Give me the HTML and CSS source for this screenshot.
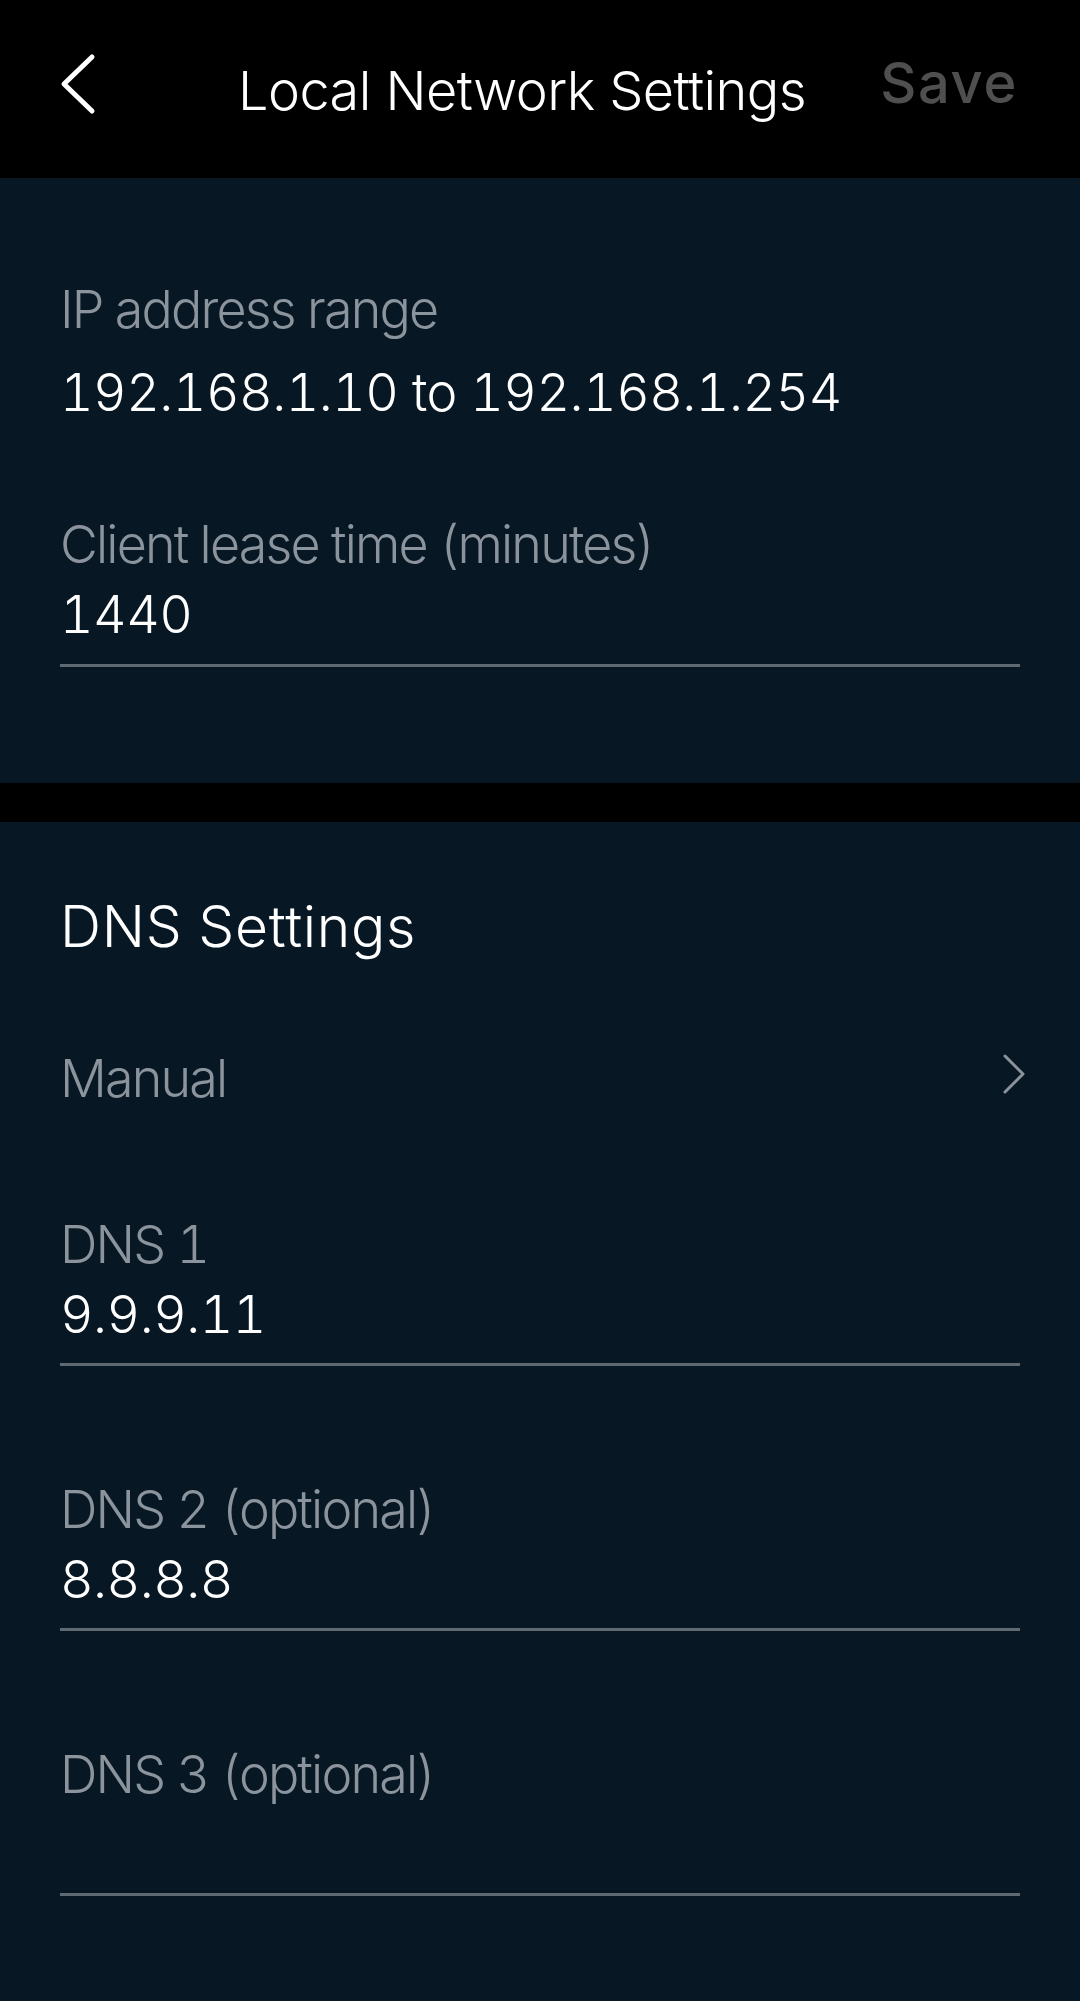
FILE: index.html
```html
<!DOCTYPE html>
<html lang="en">
  <head>
    <meta charset="UTF-8" />
    <meta name="viewport" content="width=device-width, initial-scale=1.0" />
    <title>Local Network Settings</title>
    <link rel="stylesheet" href="styles.css">
  </head>
  <body>
    <header class="topbar">
      <button class="back-btn" aria-label="Back">
        <svg width="40" height="62" viewBox="0 0 40 62">
          <path d="M34 4 L6 31 L34 58" fill="none" stroke="#fff" stroke-width="5" stroke-linecap="round" stroke-linejoin="round" />
        </svg>
      </button>
      <h1 class="topbar-title">Local Network Settings</h1>
      <button class="save-btn">Save</button>
    </header>

    <main>
      <section class="panel panel-lan">
        <div class="field-label">IP address range</div>
        <div class="static-value">192.168.1.10 to 192.168.1.254</div>

        <div class="field field-lease">
          <div class="field-label">Client lease time (minutes)</div>
          <div class="field-value">1440</div>
        </div>
      </section>

      <section class="panel panel-dns">
        <h2 class="panel-title">DNS Settings</h2>

        <a class="nav-row" href="#">
          <span class="field-label">Manual</span>
          <svg class="row-chevron" width="28" height="42" viewBox="0 0 28 42">
            <path d="M5 3 L23 21 L5 39" fill="none" stroke="#8b949c" stroke-width="3" stroke-linecap="round" stroke-linejoin="round" />
          </svg>
        </a>

        <div class="field field-dns">
          <div class="field-label">DNS 1</div>
          <div class="field-value">9.9.9.11</div>
        </div>
        <div class="field field-dns">
          <div class="field-label">DNS 2 (optional)</div>
          <div class="field-value">8.8.8.8</div>
        </div>
        <div class="field field-dns">
          <div class="field-label">DNS 3 (optional)</div>
          <div class="field-value"></div>
        </div>
      </section>
    </main>
  </body>
</html>
```

FILE: styles.css
```css
*,
*::before,
*::after {
  box-sizing: border-box;
}
:root {
  --clr-black: #000;
  --clr-panel: #071824;
  --clr-white: #fff;
  --clr-muted: #8b949c;
  --clr-rule: #5f6972;
  --clr-disabled: #4f4f4f;
  --ff-base: Inter, "Noto Sans", sans-serif;
}
body {
  min-height: 100vh;
  margin: 0;
  font-family: var(--ff-base);
  font-weight: 300;
  color: var(--clr-white);
  background-color: var(--clr-panel);
}
button {
  font: inherit;
  color: inherit;
  background: none;
  border: 0;
  padding: 0;
  cursor: pointer;
}

/* top bar */
.topbar {
  display: flex;
  align-items: center;
  height: 178px;
  padding: 0 62px 0 58px;
  background-color: var(--clr-black);
}
.back-btn {
  display: flex;
  width: 40px;
  margin-bottom: 11px;
}
.topbar-title {
  flex: 1;
  margin: 0;
  padding: 4px 0 0 66px;
  font-size: 54px;
  font-weight: 300;
  line-height: 1;
  text-align: center;
  letter-spacing: -0.01em;
}
.save-btn {
  margin-bottom: 12px;
  font-size: 56px;
  font-weight: 500;
  line-height: 1;
  letter-spacing: 0.03em;
  color: var(--clr-disabled);
}

/* panels */
.panel {
  padding: 0 60px;
  font-size: 52px;
  line-height: 70px;
  letter-spacing: -0.01em;
  font-variant-numeric: tabular-nums;
}
.panel-lan {
  padding-top: 97px;
  padding-bottom: 116px;
  border-bottom: 39px solid var(--clr-black);
}
.panel-dns {
  padding-top: 70px;
  padding-bottom: 106px;
}
.panel-title {
  margin: 0;
  font-size: 57px;
  font-weight: 300;
  line-height: 70px;
  letter-spacing: 0.012em;
}

.field-label {
  color: var(--clr-muted);
  letter-spacing: -0.035em;
}
.static-value {
  margin-top: 13px;
}
.field-value {
  min-height: 70px;
  margin-bottom: 13px;
}
.field::after {
  content: "";
  display: block;
  height: 3px;
  background-color: var(--clr-rule);
}
.field-lease {
  margin-top: 82px;
}
.field-lease .field-value {
  margin-bottom: 14px;
}
.field-dns {
  margin-top: 109px;
}
.field-dns:first-of-type {
  margin-top: 96px;
}

/* nav row */
.nav-row {
  display: flex;
  align-items: center;
  justify-content: space-between;
  margin-top: 82px;
  text-decoration: none;
}
.row-chevron {
  margin: 0 -8px 10px 0;
}
```
